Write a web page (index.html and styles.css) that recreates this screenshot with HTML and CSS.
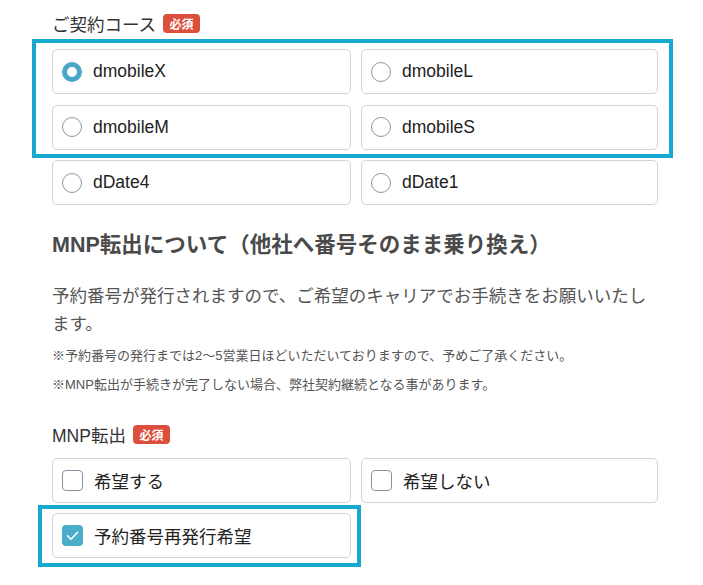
FILE: index.html
```html
<!DOCTYPE html>
<html lang="ja">
<head>
<meta charset="utf-8">
<link rel="stylesheet" href="styles.css">
</head>
<body>
<div class="page">
  <div class="field-label field-label--course"><span>ご契約コース</span><span class="badge">必須</span></div>
  <div class="options">
    <label class="option"><span class="radio radio--on"></span><span class="opt-text">dmobileX</span></label>
    <label class="option"><span class="radio"></span><span class="opt-text">dmobileL</span></label>
    <label class="option"><span class="radio"></span><span class="opt-text">dmobileM</span></label>
    <label class="option"><span class="radio"></span><span class="opt-text">dmobileS</span></label>
    <label class="option"><span class="radio"></span><span class="opt-text">dDate4</span></label>
    <label class="option"><span class="radio"></span><span class="opt-text">dDate1</span></label>
  </div>

  <h2 class="heading">MNP転出について（他社へ番号そのまま乗り換え）</h2>
  <p class="lead">予約番号が発行されますので、ご希望のキャリアでお手続きをお願いいたします。</p>
  <p class="note">※予約番号の発行までは2〜5営業日ほどいただいておりますので、予めご了承ください。</p>
  <p class="note">※MNP転出が手続きが完了しない場合、弊社契約継続となる事があります。</p>

  <div class="field-label field-label--mnp"><span>MNP転出</span><span class="badge">必須</span></div>
  <div class="options options--check">
    <label class="option"><span class="check"></span><span class="opt-text">希望する</span></label>
    <label class="option"><span class="check"></span><span class="opt-text">希望しない</span></label>
    <label class="option"><span class="check check--on"><svg viewBox="0 0 21 21" width="21" height="21"><path d="M5.5 10.8 L9 14.2 L15.6 7.3" fill="none" stroke="#fff" stroke-width="1.6" stroke-linecap="round" stroke-linejoin="round"/></svg></span><span class="opt-text">予約番号再発行希望</span></label>
  </div>
</div>
<div class="highlight highlight--course"></div>
<div class="highlight highlight--reissue"></div>
</body>
</html>
```
FILE: styles.css
```css
html, body {
  margin: 0;
  padding: 0;
  background: #fff;
}
body {
  position: relative;
  width: 703px;
  height: 585px;
  overflow: hidden;
  font-family: "Liberation Sans", "Noto Sans CJK JP", sans-serif;
  color: #222;
}
.page {
  padding: 14px 45px 0 52px;
}
.field-label {
  display: flex;
  align-items: center;
  gap: 7px;
  height: 19px;
  font-size: 17.5px;
  color: #333;
}
.field-label--course {
  margin-bottom: 16px;
}
.field-label--mnp {
  margin-top: 26px;
  margin-bottom: 14.5px;
}
.badge {
  display: inline-flex;
  align-items: center;
  justify-content: center;
  width: 37px;
  height: 19px;
  border-radius: 4px;
  background: #dc4f3c;
  color: #fff;
  font-size: 12px;
  font-weight: bold;
  font-family: "Noto Sans CJK JP", sans-serif;
}
.options {
  display: grid;
  grid-template-columns: 299px 297px;
  column-gap: 10px;
  row-gap: 10.5px;
}
.options--check {
  row-gap: 10px;
}
.option {
  display: flex;
  align-items: center;
  gap: 11px;
  height: 45px;
  box-sizing: border-box;
  padding-left: 9px;
  border: 1px solid #d3d3d3;
  border-radius: 5px;
  background: #fff;
  font-size: 17.5px;
  color: #222;
}
.radio {
  width: 20px;
  height: 20px;
  box-sizing: border-box;
  border: 1px solid #8c98a4;
  border-radius: 50%;
  flex: none;
}
.radio--on {
  border: 5px solid #4aa6c6;
}
.check {
  width: 21px;
  height: 21px;
  box-sizing: border-box;
  border: 1px solid #8794a0;
  border-radius: 4px;
  flex: none;
  display: flex;
}
.check--on {
  border: none;
  background: #4aaecb;
}
.heading {
  margin: 25px 0 0;
  font-size: 21.5px;
  line-height: 30px;
  font-weight: bold;
  color: #4a4a4a;
}
.lead {
  margin: 22px 0 0;
  font-size: 17.5px;
  line-height: 28px;
  color: #555;
}
.note {
  margin: 0;
  font-size: 13px;
  line-height: 29px;
  color: #555;
}
.lead + .note {
  margin-top: 2.5px;
}
.highlight {
  position: absolute;
  box-sizing: border-box;
  border: 4px solid #17a8cf;
  pointer-events: none;
}
.highlight--course {
  left: 32px;
  top: 39px;
  width: 641px;
  height: 119px;
}
.highlight--reissue {
  left: 38px;
  top: 505px;
  width: 323px;
  height: 62px;
}
```
